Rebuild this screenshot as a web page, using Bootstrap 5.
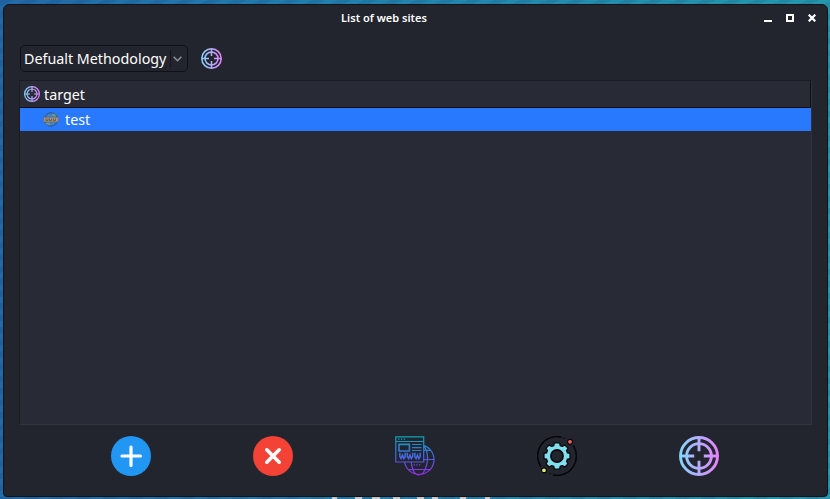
<!DOCTYPE html>
<html lang="en">
<head>
<meta charset="utf-8">
<title>List of web sites</title>
<link href="https://cdn.jsdelivr.net/npm/bootstrap@5.3.0/dist/css/bootstrap.min.css" rel="stylesheet">
<style>
body{width:830px;height:499px;font-family:"Noto Sans",sans-serif;font-size:14.3px;font-weight:400;line-height:20px;color:#fff;
 background:repeating-linear-gradient(155deg,rgba(0,20,60,.09) 0 5px,transparent 6px 11px),linear-gradient(90deg,#2269a8,#2384ad 50%,#2597ad);padding:4px 2px 2px 3px}
.window{height:493px;background:#23252e;border:1px solid #101217;border-radius:6px 6px 4px 4px}
.titlebar{height:27px;padding:0 11px 2px 0}
.titlebar h1{font-size:11px;font-weight:600;line-height:16px}
.controls{gap:14px;padding-top:1px}
.toolbar{height:48px;padding:13px 0 8px 16px}
.picker{width:168px;height:27px;background:#23252e;border:1px solid #0f1116;border-radius:5px;padding:0 5px 0 3px;color:#fff;font-size:14.3px;line-height:20px;white-space:nowrap}
.picker-label{padding-top:1px}
.divider{width:1px;height:17px;background:#14161b}
.tree{margin:0 15px 0 15px;height:345px;background:#282a36;border:1px solid #1a1c23;border-right-color:#30323f;border-bottom-color:#30323f}
.tree-head{height:27px;border-bottom:1px solid #0d0e12;border-right:1px solid #0d0e12;padding-left:4px}
.tree-head span{padding-top:1px}
.tree-item{height:23px;background:#2979ff;padding-left:23px}
.tree-item span{margin-left:6px}
.actions{width:710px;margin-left:56px;margin-top:11px}
.tool{border:0;background:none;padding:0}
.lettering{left:331px;top:497px}
svg{display:block;flex:none}
</style>
</head>
<body class="m-0 overflow-hidden position-relative">
<svg width="0" height="0" class="position-absolute">
<defs>
<linearGradient id="gTarget" gradientUnits="userSpaceOnUse" x1="0" x2="40" y1="0" y2="0"><stop stop-color="#80d8ff"/><stop offset="1" stop-color="#ea80fc"/></linearGradient>
<linearGradient id="gWeb" gradientUnits="userSpaceOnUse" x1="0" x2="0" y1="0" y2="40"><stop stop-color="#0aa5b8"/><stop offset=".5" stop-color="#4268e0"/><stop offset="1" stop-color="#9c27e8"/></linearGradient>
<symbol id="target" viewBox="0 0 40 40"><g fill="none" stroke="url(#gTarget)" stroke-width="2.9"><circle cx="20" cy="20" r="18.5"/><circle cx="20" cy="20" r="12.4"/><path d="M20 1.5V15.2M20 24.8V38.5M1.5 20.01H15.2M24.8 20.01H38.5"/></g></symbol>
</defs>
</svg>
<main class="window d-flex flex-column">
 <header class="titlebar d-flex align-items-center">
  <h1 class="m-0 flex-grow-1 text-center">List of web sites</h1>
  <div class="controls d-flex">
   <svg width="8" height="8"><path d="M0 6H8V8H0Z" fill="#fff"/></svg>
   <svg width="8" height="8"><path d="M1 1H7V7H1Z" fill="none" stroke="#fff" stroke-width="2"/></svg>
   <svg width="8" height="8"><path d="M.7 .7 7.3 7.3M7.3 .7 .7 7.3" stroke="#fff" stroke-width="2.2"/></svg>
  </div>
 </header>
 <div class="toolbar d-flex align-items-center">
  <button class="picker d-flex align-items-center justify-content-between" type="button"><span class="picker-label">Defualt Methodology</span>
   <span class="d-flex align-items-center" style="gap:2px"><i class="divider"></i><svg width="9" height="6"><path d="M.6 .7 4.5 4.8 8.4 .7" fill="none" stroke="#8f929c" stroke-width="1.4"/></svg></span></button>
  <svg width="21" height="21" style="margin-left:13px"><use href="#target"/></svg>
 </div>
 <section class="tree">
  <div class="tree-head d-flex align-items-center gap-1"><svg width="16" height="16"><use href="#target"/></svg><span>target</span></div>
  <div class="tree-item d-flex align-items-center">
   <svg width="16" height="16" viewBox="0 0 16 16"><circle cx="8" cy="7.5" r="6.6" fill="#3f83c8" stroke="#24476e" stroke-width=".8"/><path d="M9 1.3 12 2.4 13.5 4.5 10 4ZM2.5 11H6L7.5 13.5 4 12.6Z" fill="#8a9a67"/><path d="M.6 5.3H15.4V9.9H.6Z" fill="#a69582" stroke="#70665c" stroke-width=".6"/><path d="M3 6.5V8.5H5V6.5M6.5 6.5V8.5H8.5V6.5M10.5 6.5V8.5H12.5V6.5" fill="none" stroke="#5b5350" stroke-width=".8"/></svg>
   <span>test</span></div>
 </section>
 <nav class="actions row row-cols-5 g-0">
  <div class="col d-flex justify-content-center"><button class="tool" aria-label="Add"><svg width="40" height="40"><circle cx="20" cy="20" r="20" fill="#2196f3"/><path d="M20 11V29.5M11 20H29.5" stroke="#fff" stroke-width="3.2" stroke-linecap="round"/></svg></button></div>
  <div class="col d-flex justify-content-center"><button class="tool" aria-label="Remove"><svg width="40" height="40"><circle cx="20" cy="20" r="20" fill="#f44336"/><path d="M13.8 13.8 26.2 26.2M26.2 13.8 13.8 26.2" stroke="#fff" stroke-width="3.6" stroke-linecap="round"/></svg></button></div>
  <div class="col d-flex justify-content-center"><button class="tool" aria-label="Sites"><svg width="40" height="40" fill="none" stroke="url(#gWeb)" stroke-width="1.2">
   <path d="M29 9.6A14.8 14.8 0 1 1 9.6 26M28.8 10C33 15 34 25 30 34 26.5 40.5 21 40.5 18 34 17 31 16.3 29 16.2 26M29 14.3H36M29 23.5H38.5M12.5 33.5H35.5"/>
   <path d="M.8 .8H28.7V26H.8ZM.8 5.5H28.7M3.2 3.1H4.5M6 3.1H7.3M8.8 3.1H10.1M17 8.5H26.5M17 11.7H26.5M17 14.5H26.5M18.5 28.8H19.8M21.3 28.8H22.6M24.1 28.8H25.4"/>
   <path d="M4 8.4H14.4V15H4Z" stroke-width="1.6"/>
   <path d="M4.8 16.8V20.5L6.1 22.6 7.5 19 8.9 22.6 10.2 20.5V16.8M12.3 16.8V20.5L13.6 22.6 15 19 16.4 22.6 17.7 20.5V16.8M19.8 16.8V20.5L21.1 22.6 22.5 19 23.9 22.6 25.2 20.5V16.8" stroke-width="1.5"/></svg></button></div>
  <div class="col d-flex justify-content-center"><button class="tool" aria-label="Settings"><svg width="40" height="40">
   <path d="M36.5 10A19.2 19.2 0 0 1 16.5 39M3.5 30A19.2 19.2 0 0 1 24 1.1M26.9 2.2H27M13.1 37.8H13" fill="none" stroke="#050609" stroke-width="1.5" stroke-linecap="round"/>
   <g stroke="#050609" stroke-width="1.2" stroke-linejoin="round"><path d="M17.4 7H22.6L23.2 9.6 25.4 10.5 27.8 9 31 12.2 29.5 14.6 30.4 16.8 33 17.4V22.6L30.4 23.2 29.5 25.4 31 27.8 27.8 31 25.4 29.5 23.2 30.4 22.6 33H17.4L16.8 30.4 14.6 29.5 12.2 31 9 27.8 10.5 25.4 9.6 23.2 7 22.6V17.4L9.6 16.8 10.5 14.6 9 12.2 12.2 9 14.6 10.5 16.8 9.6Z" fill="#80deef"/><circle cx="20" cy="20" r="6.1" fill="#23252e" stroke-width="1.6"/><circle cx="33" cy="5.8" r="2.5" fill="#ff5d67"/><circle cx="7" cy="34.3" r="2.5" fill="#e3ed69"/></g></svg></button></div>
  <div class="col d-flex justify-content-center"><button class="tool" aria-label="Target"><svg width="40" height="40"><use href="#target"/></svg></button></div>
 </nav>
</main>
<!-- Wallpaper lettering showing below the window -->
<svg class="lettering position-absolute" width="160" height="2"><path d="M1 0H6V2H1ZM24 0H31V2H24ZM41 0H49V2H41ZM62 0H69V2H62ZM86 0H93V2H86ZM101 0H107V2H101ZM129 0H135V2H129ZM154 0H159V2H154Z" fill="#c7c8cd"/></svg>
<script src="https://cdn.jsdelivr.net/npm/bootstrap@5.3.0/dist/js/bootstrap.bundle.min.js"></script>
</body>
</html>
